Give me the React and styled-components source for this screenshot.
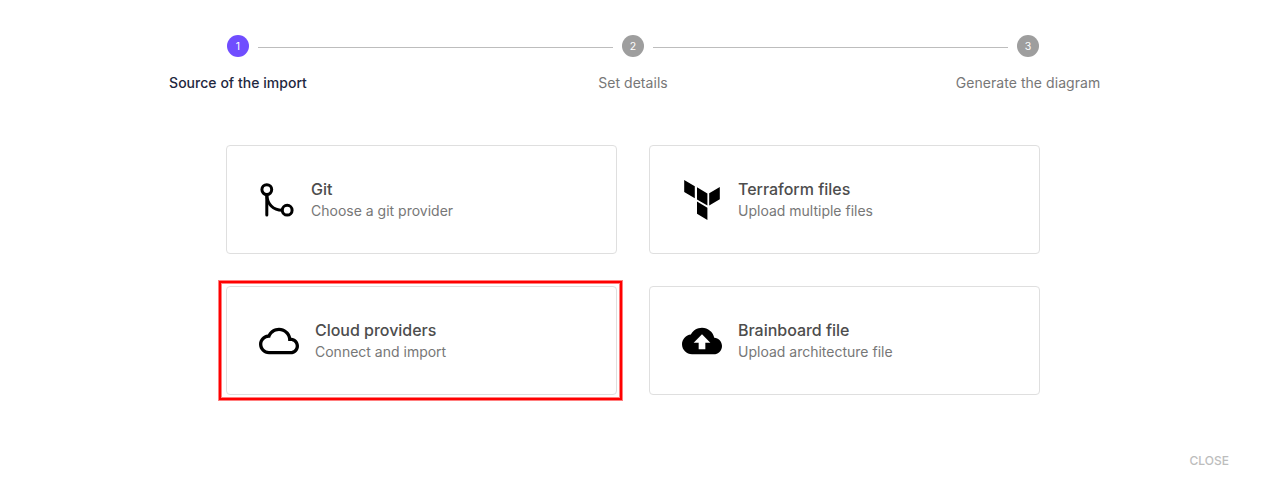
import React from "react";
import styled, { createGlobalStyle } from "styled-components";

const GlobalStyle = createGlobalStyle`
  *, *::before, *::after { box-sizing: border-box; }
  body {
    margin: 0;
    background: #fff;
    font-family: Inter, "Liberation Sans", sans-serif;
  }
`;

const Page = styled.div`
  width: 1272px;
  height: 497px;
  display: flex;
  flex-direction: column;
  overflow: hidden;
`;

const Stepper = styled.ol`
  list-style: none;
  margin: 0;
  padding: 35px 46px 0 40px;
  display: flex;
`;

const Step = styled.li`
  flex: 0 0 395px;
  display: flex;
  flex-direction: column;
  align-items: center;
`;

const Track = styled.div`
  width: 100%;
  display: grid;
  grid-template-columns: 1fr 22px 1fr;
  column-gap: 9px;
`;

const Rail = styled.span`
  height: 1px;
  margin-top: 12px;
  background: ${(p) => (p.$visible ? "#bdbdbd" : "transparent")};
`;

const Badge = styled.span`
  height: 22px;
  padding: 1px 0 0 1px;
  border-radius: 50%;
  display: flex;
  align-items: center;
  justify-content: center;
  color: #fff;
  font-size: 10.5px;
  line-height: 21px;
  background: ${(p) => (p.$active ? "#704dff" : "#9e9e9e")};
`;

const StepLabel = styled.span`
  margin-top: 16px;
  padding-left: 1px;
  font-size: 14px;
  line-height: 20px;
  letter-spacing: ${(p) => (p.$active ? "0.03px" : "0.05px")};
  font-weight: ${(p) => (p.$active ? 500 : 400)};
  color: ${(p) => (p.$active ? "#1f2840" : "#777")};
`;

const Sources = styled.main`
  margin: 52px 0 0 226px;
  display: grid;
  grid-template-columns: 391px 391px;
  grid-auto-rows: 109px;
  gap: 32px;
`;

const Card = styled.section`
  position: relative;
  display: flex;
  align-items: center;
  gap: 16px;
  padding: 0 32px;
  border: 1px solid #dfdfdf;
  border-radius: 4px;
  color: #000;

  > svg { flex: none; display: block; }
`;

const CardText = styled.div`
  display: flex;
  flex-direction: column;
  padding-bottom: 2px;
`;

const CardTitle = styled.span`
  font-size: 16px;
  line-height: 24px;
  font-weight: 500;
  letter-spacing: -0.02px;
  color: #4d4d4d;
`;

const CardHint = styled.span`
  font-size: 14px;
  line-height: 20px;
  color: #777;
`;

const Highlight = styled.div`
  position: absolute;
  inset: -6px -6px -6px -8px;
  border: 2px solid #ff0000;
  box-shadow: 0 0 0 1px rgba(255, 0, 0, 0.5), inset 0 0 0 1px rgba(255, 0, 0, 0.5);
`;

const Footer = styled.footer`
  display: flex;
  justify-content: flex-end;
  padding: 56px 43px 0 0;
`;

const CloseButton = styled.button`
  border: 0;
  padding: 0;
  background: none;
  font-family: inherit;
  font-size: 12px;
  line-height: 20px;
  font-weight: 500;
  color: #bdbdbd;
`;

const GitIcon = () => (
  <svg width="36" height="36" viewBox="0 0 36 36" fill="none" stroke="currentColor" strokeWidth="3">
    <circle cx="7.8" cy="7.6" r="4.9" />
    <circle cx="28.2" cy="28.2" r="4.9" />
    <path d="M7.8 12.5V33" strokeLinecap="round" />
    <path d="M7.8 13C8.3 22 14 28.2 23.2 28.2" />
  </svg>
);

const TerraformIcon = () => (
  <svg width="40" height="40" viewBox="0 0 40 40" fill="currentColor">
    <path d="M2.2 0L12.8 6.2V18.2L2.2 12.1zM15 7.3L25.4 13.4V25.5L15 19.4zM37.8 7.1V19.2L27.2 25.4V13.3zM15 21.6L25.4 27.7V39.9L15 33.7z" />
  </svg>
);

const CloudIcon = () => (
  <svg width="40" height="40" viewBox="0 0 24 24" fill="currentColor">
    <path d="M19.35 10.04C18.67 6.59 15.64 4 12 4 9.11 4 6.6 5.64 5.35 8.04 2.34 8.36 0 10.91 0 14c0 3.31 2.69 6 6 6h13c2.76 0 5-2.24 5-5 0-2.64-2.05-4.78-4.65-4.96zM19 18H6c-2.21 0-4-1.79-4-4s1.79-4 4-4h.71C7.37 7.69 9.48 6 12 6c3.04 0 5.5 2.46 5.5 5.5v.5H19c1.66 0 3 1.34 3 3s-1.34 3-3 3z" />
  </svg>
);

const CloudUploadIcon = () => (
  <svg width="40" height="40" viewBox="0 0 24 24" fill="currentColor">
    <path d="M19.35 10.04C18.67 6.59 15.64 4 12 4 9.11 4 6.6 5.64 5.35 8.04 2.34 8.36 0 10.91 0 14c0 3.31 2.69 6 6 6h13c2.76 0 5-2.24 5-5 0-2.64-2.05-4.78-4.65-4.96zM14 13v4h-4v-4H7l5-5 5 5h-3z" />
  </svg>
);

const steps = ["Source of the import", "Set details", "Generate the diagram"];

const sources = [
  { title: "Git", hint: "Choose a git provider", Icon: GitIcon },
  { title: "Terraform files", hint: "Upload multiple files", Icon: TerraformIcon },
  { title: "Cloud providers", hint: "Connect and import", Icon: CloudIcon, highlighted: true },
  { title: "Brainboard file", hint: "Upload architecture file", Icon: CloudUploadIcon },
];

export default function App() {
  return (
    <Page>
      <GlobalStyle />
      <Stepper>
        {steps.map((label, i) => (
          <Step key={label}>
            <Track>
              <Rail $visible={i > 0} />
              <Badge $active={i === 0}>{i + 1}</Badge>
              <Rail $visible={i < steps.length - 1} />
            </Track>
            <StepLabel $active={i === 0}>{label}</StepLabel>
          </Step>
        ))}
      </Stepper>
      <Sources>
        {sources.map(({ title, hint, Icon, highlighted }) => (
          <Card key={title}>
            <Icon />
            <CardText>
              <CardTitle>{title}</CardTitle>
              <CardHint>{hint}</CardHint>
            </CardText>
            {highlighted && <Highlight />}
          </Card>
        ))}
      </Sources>
      <Footer>
        <CloseButton type="button">CLOSE</CloseButton>
      </Footer>
    </Page>
  );
}
